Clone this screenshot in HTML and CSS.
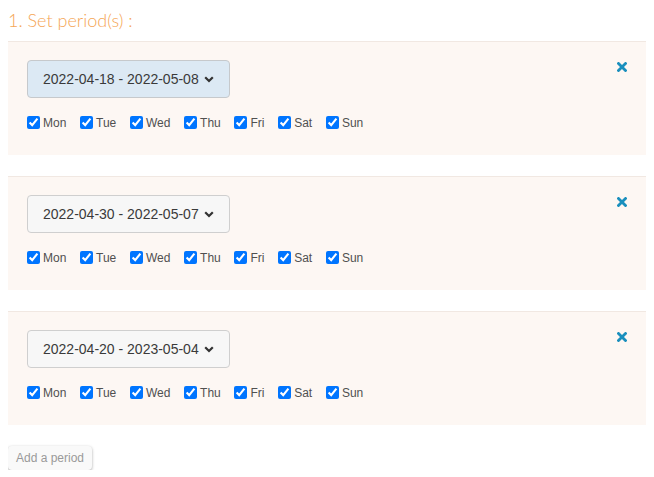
FILE: index.html
```html
<!DOCTYPE html>
<html>
<head>
<meta charset="utf-8">
<link rel="stylesheet" href="styles.css">
</head>
<body>
<div class="title">1. Set period(s) :</div>

<div class="period">
  <div class="period-body">
    <button class="range active">2022-04-18 - 2022-05-08 <svg class="chev" viewBox="0 0 10 7" width="10" height="7"><path d="M1.2 1.2 L5 5 L8.8 1.2" fill="none" stroke="#333" stroke-width="2.2"/></svg></button>
    <div class="days">
      <label class="day"><input type="checkbox" checked>Mon</label>
      <label class="day"><input type="checkbox" checked>Tue</label>
      <label class="day"><input type="checkbox" checked>Wed</label>
      <label class="day"><input type="checkbox" checked>Thu</label>
      <label class="day"><input type="checkbox" checked>Fri</label>
      <label class="day"><input type="checkbox" checked>Sat</label>
      <label class="day"><input type="checkbox" checked>Sun</label>
    </div>
  </div>
  <span class="close"><svg viewBox="0 0 10 10" width="10" height="10"><path d="M1.5 1.5 L8.5 8.5 M8.5 1.5 L1.5 8.5" stroke="#1a8fbd" stroke-width="2.8" stroke-linecap="square"/></svg></span>
</div>

<div class="period">
  <div class="period-body">
    <button class="range">2022-04-30 - 2022-05-07 <svg class="chev" viewBox="0 0 10 7" width="10" height="7"><path d="M1.2 1.2 L5 5 L8.8 1.2" fill="none" stroke="#333" stroke-width="2.2"/></svg></button>
    <div class="days">
      <label class="day"><input type="checkbox" checked>Mon</label>
      <label class="day"><input type="checkbox" checked>Tue</label>
      <label class="day"><input type="checkbox" checked>Wed</label>
      <label class="day"><input type="checkbox" checked>Thu</label>
      <label class="day"><input type="checkbox" checked>Fri</label>
      <label class="day"><input type="checkbox" checked>Sat</label>
      <label class="day"><input type="checkbox" checked>Sun</label>
    </div>
  </div>
  <span class="close"><svg viewBox="0 0 10 10" width="10" height="10"><path d="M1.5 1.5 L8.5 8.5 M8.5 1.5 L1.5 8.5" stroke="#1a8fbd" stroke-width="2.8" stroke-linecap="square"/></svg></span>
</div>

<div class="period">
  <div class="period-body">
    <button class="range">2022-04-20 - 2023-05-04 <svg class="chev" viewBox="0 0 10 7" width="10" height="7"><path d="M1.2 1.2 L5 5 L8.8 1.2" fill="none" stroke="#333" stroke-width="2.2"/></svg></button>
    <div class="days">
      <label class="day"><input type="checkbox" checked>Mon</label>
      <label class="day"><input type="checkbox" checked>Tue</label>
      <label class="day"><input type="checkbox" checked>Wed</label>
      <label class="day"><input type="checkbox" checked>Thu</label>
      <label class="day"><input type="checkbox" checked>Fri</label>
      <label class="day"><input type="checkbox" checked>Sat</label>
      <label class="day"><input type="checkbox" checked>Sun</label>
    </div>
  </div>
  <span class="close"><svg viewBox="0 0 10 10" width="10" height="10"><path d="M1.5 1.5 L8.5 8.5 M8.5 1.5 L1.5 8.5" stroke="#1a8fbd" stroke-width="2.8" stroke-linecap="square"/></svg></span>
</div>

<button class="add">Add a period</button>
</body>
</html>
```

FILE: styles.css
```css
body {
  margin: 8px;
  font-family: "Liberation Sans", Arial, sans-serif;
  background: #fff;
}
.title {
  font-family: Lato, sans-serif;
  font-weight: 300;
  font-size: 18px;
  line-height: 22px;
  color: #f5a656;
  padding-top: 1px;
  margin-bottom: 10px;
}
.period {
  display: flex;
  justify-content: space-between;
  align-items: flex-start;
  background: #fdf7f3;
  border-top: 1px solid #f1e8e2;
  height: 113px;
  box-sizing: content-box;
  margin-bottom: 21px;
}
.period-body {
  padding: 18px 0 0 19px;
}
.range {
  display: flex;
  align-items: center;
  gap: 5px;
  width: 203px;
  height: 38px;
  box-sizing: border-box;
  padding: 0 0 0 15px;
  font-family: "Liberation Sans", Arial, sans-serif;
  font-size: 14px;
  color: #3a3a3a;
  background: #f7f7f7;
  border: 1px solid #cfcfcf;
  border-radius: 4px;
}
.range.active {
  background: #dce9f4;
  border-color: #c6c9cc;
}
.chev {
  display: block;
}
.days {
  display: flex;
  margin-top: 17px;
}
.day {
  display: flex;
  align-items: center;
  font-size: 12px;
  color: #505050;
  margin-right: 13.7px;
  padding-top: 1px;
}
.day input {
  width: 13px;
  height: 13px;
  margin: -1px 3px 0 0;
}
.close {
  display: block;
  margin: 20px 19px 0 0;
  line-height: 0;
}
.add {
  display: block;
  width: 84px;
  height: 24px;
  padding: 0;
  font-family: "Liberation Sans", Arial, sans-serif;
  font-size: 12px;
  color: #999;
  background: #f9f9f9;
  border: none;
  border-radius: 4px;
  box-shadow: 0 1px 3px rgba(0,0,0,0.35);
}
```
